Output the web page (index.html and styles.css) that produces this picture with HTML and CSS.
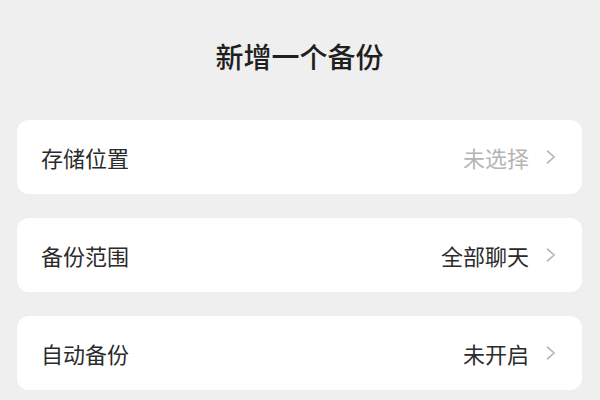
FILE: index.html
```html
<!DOCTYPE html>
<html lang="zh-CN">
<head>
<meta charset="utf-8">
<link rel="stylesheet" href="styles.css">
</head>
<body>
<div class="page">
  <h1 class="title">新增一个备份</h1>
  <div class="card">
    <span class="label">存储位置</span>
    <span class="value muted">未选择<svg class="chev" viewBox="0 0 10 14" width="10" height="14"><path d="M1.5 1.2 L8.2 7 L1.5 12.8" fill="none" stroke="#b3b3b3" stroke-width="1.6" stroke-linecap="round" stroke-linejoin="round"/></svg></span>
  </div>
  <div class="card">
    <span class="label">备份范围</span>
    <span class="value">全部聊天<svg class="chev" viewBox="0 0 10 14" width="10" height="14"><path d="M1.5 1.2 L8.2 7 L1.5 12.8" fill="none" stroke="#b3b3b3" stroke-width="1.6" stroke-linecap="round" stroke-linejoin="round"/></svg></span>
  </div>
  <div class="card">
    <span class="label">自动备份</span>
    <span class="value">未开启<svg class="chev" viewBox="0 0 10 14" width="10" height="14"><path d="M1.5 1.2 L8.2 7 L1.5 12.8" fill="none" stroke="#b3b3b3" stroke-width="1.6" stroke-linecap="round" stroke-linejoin="round"/></svg></span>
  </div>
</div>
</body>
</html>
```
FILE: styles.css
```css
html, body {
  margin: 0;
  padding: 0;
  background: #efefef;
}
body {
  font-family: "Noto Sans CJK SC", "Noto Sans", sans-serif;
  width: 600px;
  height: 400px;
  overflow: hidden;
}
.page {
  padding: 0 18px 0 17px;
}
.title {
  margin: 40px 0 48px;
  height: 32px;
  line-height: 32px;
  text-align: center;
  font-size: 28px;
  font-weight: 500;
  color: #1f1f1f;
}
.card {
  height: 74px;
  margin-bottom: 24px;
  background: #ffffff;
  border-radius: 12px;
  display: flex;
  align-items: center;
  justify-content: space-between;
  padding: 0 26px 0 24px;
  box-sizing: border-box;
}
.label {
  font-size: 22px;
  color: #2b2b2b;
}
.value {
  display: flex;
  align-items: center;
  gap: 17px;
  font-size: 22px;
  color: #2b2b2b;
}
.value.muted {
  color: #b5b5b5;
}
.chev {
  display: block;
}
```
